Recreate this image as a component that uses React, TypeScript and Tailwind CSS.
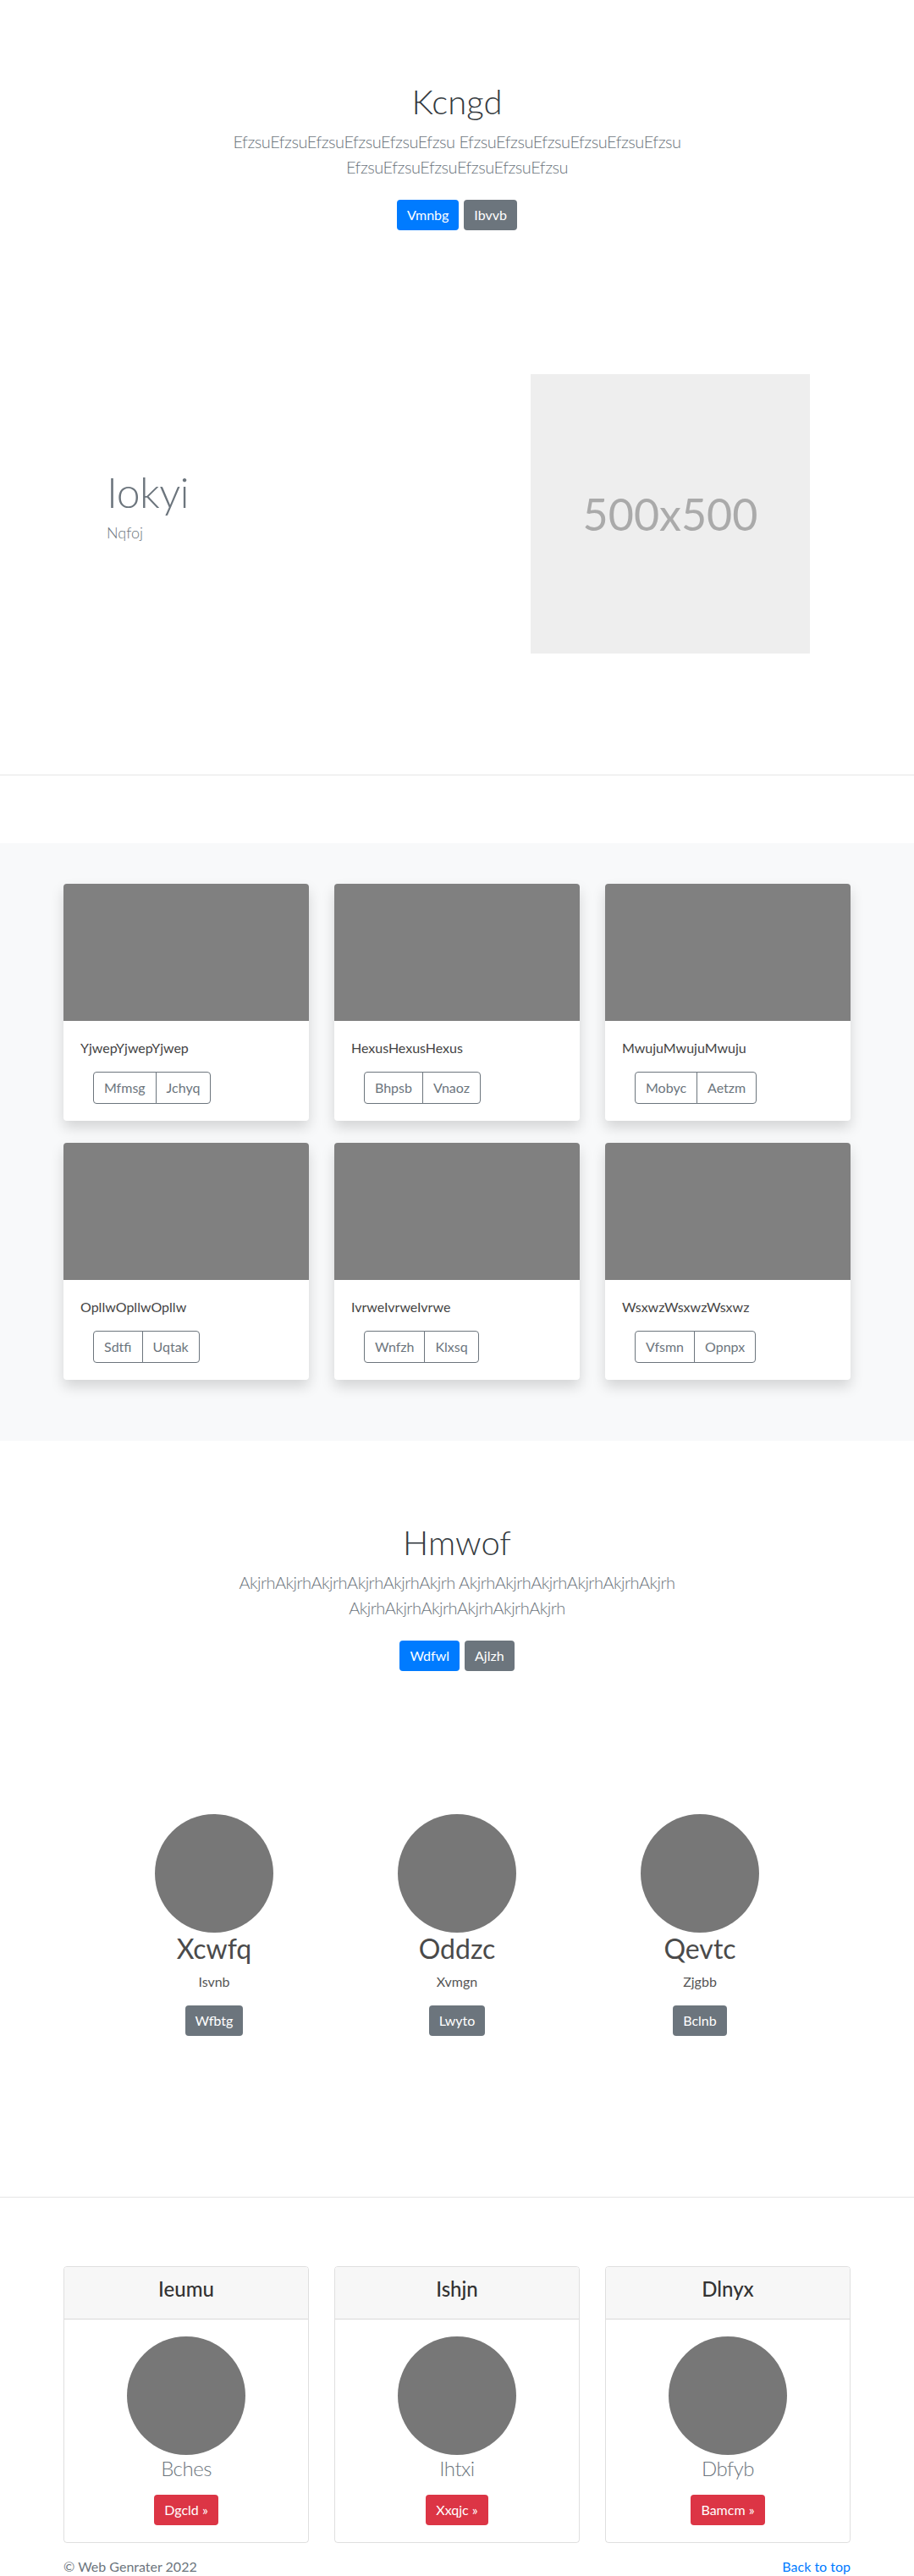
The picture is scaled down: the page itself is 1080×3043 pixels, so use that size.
import React from 'react';

const albumCards = [
  { title: 'YjwepYjwepYjwep', a: 'Mfmsg', b: 'Jchyq' },
  { title: 'HexusHexusHexus', a: 'Bhpsb', b: 'Vnaoz' },
  { title: 'MwujuMwujuMwuju', a: 'Mobyc', b: 'Aetzm' },
  { title: 'OpllwOpllwOpllw', a: 'Sdtfi', b: 'Uqtak' },
  { title: 'IvrweIvrweIvrwe', a: 'Wnfzh', b: 'Klxsq' },
  { title: 'WsxwzWsxwzWsxwz', a: 'Vfsmn', b: 'Opnpx' },
];

const people = [
  { name: 'Xcwfq', sub: 'Isvnb', btn: 'Wfbtg' },
  { name: 'Oddzc', sub: 'Xvmgn', btn: 'Lwyto' },
  { name: 'Qevtc', sub: 'Zjgbb', btn: 'Bclnb' },
];

const plans = [
  { head: 'Ieumu', name: 'Bches', btn: 'Dgcld' },
  { head: 'Ishjn', name: 'Ihtxi', btn: 'Xxqjc' },
  { head: 'Dlnyx', name: 'Dbfyb', btn: 'Bamcm' },
];

function Hero({ title, text, primary, secondary }: { title: string; text: string; primary: string; secondary: string }) {
  const word = text.repeat(6);
  return (
    <section className="pt-[96px] pb-[48px] text-center">
      <h1 className="mb-2 text-[40px] font-light leading-[1.2] text-[#343a40]">{title}</h1>
      <p className="mx-auto mb-4 max-w-[610px] text-[20px] font-light leading-[1.5] tracking-[-0.5px] text-[#6c757d]">
        {`${word} ${word} ${word}`}
      </p>
      {/* buttons sit in a padded wrapper so the spacing doesn't collapse into the lead margin */}
      <div className="mb-4 flex justify-center gap-[6px] py-2">
        <button type="button" className="rounded bg-[#007bff] px-3 py-1.5 text-base leading-6 text-white">
          {primary}
        </button>
        <button type="button" className="rounded bg-[#6c757d] px-3 py-1.5 text-base leading-6 text-white">
          {secondary}
        </button>
      </div>
    </section>
  );
}

export default function App() {
  return (
    <div className="bg-white font-['Lato',sans-serif] text-[#212529]">
      <Hero title="Kcngd" text="Efzsu" primary="Vmnbg" secondary="Ibvvb" />

      {/* Featurette */}
      <section className="mx-auto mt-[98px] flex w-[960px] items-start">
        <div className="flex-1 pl-[66px] pt-[114px]">
          <h2 className="text-[50px] font-light leading-none tracking-[-0.6px] text-[#6c757d]">Iokyi</h2>
          <p className="mt-[10px] text-[18px] font-light leading-[1.5] text-[#6c757d]">Nqfoj</p>
        </div>
        <div className="mr-[63px] flex h-[330px] w-[330px] items-center justify-center bg-[#eeeeee] text-[52px] text-[#aaaaaa]">
          500x500
        </div>
      </section>
      <hr className="mt-[143px] mb-[80px] border-t border-black/10" />

      {/* Album */}
      <section className="bg-[#f8f9fa] pt-[48px] pb-[72px]">
        <div className="mx-auto grid w-[930px] grid-cols-3 gap-x-[30px] gap-y-[26px]">
          {albumCards.map((c) => (
            <div key={c.title} className="overflow-hidden rounded bg-white shadow-[0_8px_16px_rgba(0,0,0,0.15)]">
              <div className="h-[162px] bg-[#808080]" />
              <div className="p-5">
                <p className="mb-4 text-base leading-6 text-[#444]">{c.title}</p>
                <div className="flex pl-[15px]">
                  <button type="button" className="rounded-l border border-[#6c757d] px-3 py-1.5 text-base leading-6 text-[#6c757d]">
                    {c.a}
                  </button>
                  <button type="button" className="-ml-px rounded-r border border-[#6c757d] px-3 py-1.5 text-base leading-6 text-[#6c757d]">
                    {c.b}
                  </button>
                </div>
              </div>
            </div>
          ))}
        </div>
      </section>

      <Hero title="Hmwof" text="Akjrh" primary="Wdfwl" secondary="Ajlzh" />

      {/* Marketing */}
      <section className="mx-auto grid w-[861px] grid-cols-3 pt-[97px] pb-[190px] text-center">
        {people.map((p) => (
          <div key={p.name} className="flex flex-col items-center">
            <div className="h-[140px] w-[140px] rounded-full bg-[#777777]" />
            <h2 className="mb-2 text-[32px] leading-[1.2] text-[#4a4a4a]">{p.name}</h2>
            <p className="mb-4 text-base leading-6 text-[#555]">{p.sub}</p>
            <button type="button" className="rounded bg-[#6c757d] px-3 py-1.5 text-base leading-6 text-white">
              {p.btn}
            </button>
          </div>
        ))}
      </section>
      <hr className="mb-[81px] border-t border-black/10" />

      {/* Pricing style cards */}
      <section className="mx-auto grid w-[930px] grid-cols-3 gap-x-[30px]">
        {plans.map((p) => (
          <div key={p.head} className="overflow-hidden rounded border border-black/[0.125] text-center">
            <div className="border-b border-black/[0.125] bg-[#f7f7f7] px-5 pt-3 pb-3">
              <h4 className="mb-2 text-[24px] font-medium leading-[1.2] text-[#333]">{p.head}</h4>
            </div>
            <div className="flex flex-col items-center p-5">
              <div className="h-[140px] w-[140px] rounded-full bg-[#777777]" />
              <p className="mt-[2px] mb-4 text-[24px] font-light leading-[1.2] tracking-[-0.5px] text-[#6c757d]">{p.name}</p>
              <button type="button" className="rounded bg-[#dc3545] px-3 py-1.5 text-base leading-6 text-white">
                {p.btn} »
              </button>
            </div>
          </div>
        ))}
      </section>

      <footer className="mx-auto mt-4 flex w-[930px] justify-between pb-4 text-base leading-6 text-[#6c757d]">
        <p>© Web Genrater 2022</p>
        <a href="#" className="text-[#007bff]">
          Back to top
        </a>
      </footer>
    </div>
  );
}
